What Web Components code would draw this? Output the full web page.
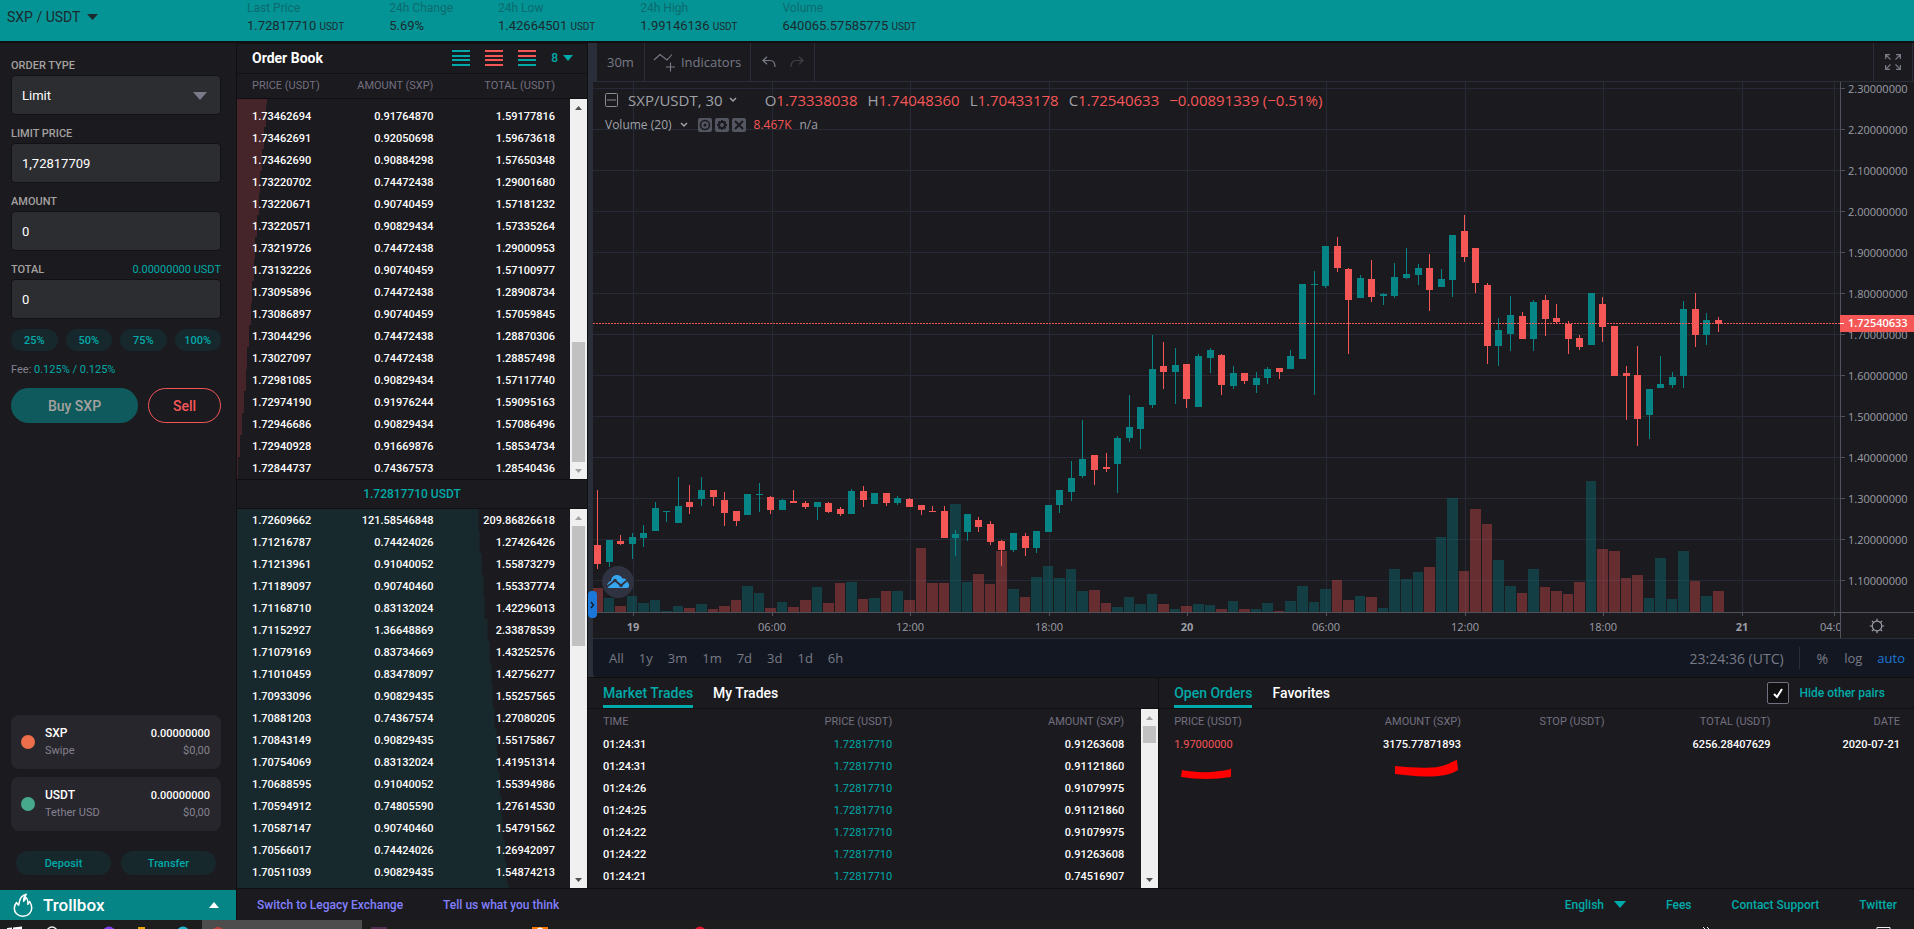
<!DOCTYPE html>
<html lang="en">
<head>
<meta charset="utf-8">
<title>SXP / USDT Exchange</title>
<style>
  :root {
    --bg: #1b1a1f;
    --edge: #101013;
    --teal: #00aaa8;
    --teal-dark: #068587;
    --red: #f55757;
    --muted: #73707f;
    --tint: #17282d;
    --grid: #262936;
    --axis: #50535e;
    --tv: #787b86;
    --tv-font: "Open Sans", "Noto Sans", sans-serif;
  }
  html, body { margin: 0; height: 100%; background: var(--bg); }
  body { font-family: Roboto, "Liberation Sans", sans-serif; color: #fff; }
</style>
</head>
<body>
<exchange-app></exchange-app>

<script>
const BASE = `*{box-sizing:border-box} button,input,select{font:inherit;color:inherit;margin:0;padding:0;border:0;background:none;appearance:none;outline:0}
button,select{cursor:pointer} svg{display:block} a{color:inherit;text-decoration:none} table{border-collapse:collapse;width:100%;table-layout:fixed} td,th{padding:0;font-weight:inherit;text-align:right}`;

function define(name, render) {
  customElements.define(name, class extends HTMLElement {
    connectedCallback() {
      if (this.shadowRoot) return;
      const template = document.createElement('template');
      template.innerHTML = `<style>${BASE}</style>` + render(this);
      this.attachShadow({ mode: 'open' }).append(template.content.cloneNode(true));
    }
  });
}

const caret = (w, h, up) => `<svg width="${w}" height="${h}" viewBox="0 0 10 6" preserveAspectRatio="none" aria-hidden="true"><path fill="currentColor" d="${up ? 'M0 6L5 0L10 6Z' : 'M0 0H10L5 6Z'}"/></svg>`;

/* ---------- top bar ---------- */
define('market-stat', el => `
<style>
  :host{display:block;font-size:13px;line-height:17px;color:#1b2a2e}
  .label{color:#0b6b6e;font-size:12px} .unit{font-size:10px}
</style>
<div class="label">${el.getAttribute('label')}</div>
<div><slot></slot>${el.hasAttribute('unit') ? ` <span class="unit">${el.getAttribute('unit')}</span>` : ''}</div>`);

define('top-bar', () => `
<style>
  :host{display:flex;height:43px;background:#059495;border-bottom:2px solid var(--edge);overflow:hidden}
  .pair{width:247px;padding-left:7px;display:flex;align-items:center;gap:7px;height:34px;font-size:14px;color:#1b2a2e}
  .stats{display:flex;gap:45px}
</style>
<button class="pair">SXP / USDT ${caret(11, 6)}</button>
<div class="stats">
  <market-stat label="Last Price" unit="USDT">1.72817710</market-stat>
  <market-stat label="24h Change">5.69%</market-stat>
  <market-stat label="24h Low" unit="USDT">1.42664501</market-stat>
  <market-stat label="24h High" unit="USDT">1.99146136</market-stat>
  <market-stat label="Volume" unit="USDT">640065.57585775</market-stat>
</div>`);

/* ---------- order form ---------- */
define('form-field', el => `
<style>
  :host{display:block;margin-bottom:8px}
  .row{display:flex;justify-content:space-between;height:20px;line-height:22px;font-size:11px;color:#a4a19f;font-weight:500}
  .hint{color:var(--teal);font-weight:400}
  .box{position:relative;height:40px}
  input,select{width:100%;height:40px;padding:0 10px;border:1px solid #121215;border-radius:4px;background:#2c2d31;color:#fff;font-size:13px}
  svg{position:absolute;right:14px;top:17px;color:#7b7889;pointer-events:none}
</style>
<div class="row"><label for="f">${el.getAttribute('label')}</label><span class="hint">${el.getAttribute('hint') || ''}</span></div>
<div class="box">${el.hasAttribute('choice')
  ? `<select id="f"><option>${el.getAttribute('value')}</option></select>${caret(14, 8)}`
  : `<input id="f" type="text" value="${el.getAttribute('value')}">`}</div>`);

define('coin-balance', el => `
<style>
  :host{display:grid;grid-template-columns:34px 1fr auto;align-items:center;height:54px;margin-bottom:8px;padding-right:11px;border-radius:8px;background:#27262c;font-size:12px;line-height:17px}
  i{width:14px;height:14px;border-radius:50%;margin-left:10px;background:${el.getAttribute('color')}}
  b{display:block;font-weight:500} .sub{color:#85828f;font-size:11px} .r{text-align:right} .r b{font-size:11px}
</style>
<i></i><div><b>${el.getAttribute('code')}</b><span class="sub">${el.getAttribute('name')}</span></div>
<div class="r"><b>0.00000000</b><span class="sub">$0,00</span></div>`);

define('order-form', () => `
<style>
  :host{display:flex;flex-direction:column;border-right:1px solid var(--edge);background:var(--bg)}
  .form{padding:12px 15px 0 11px}
  .pct{display:grid;grid-template-columns:repeat(4,1fr);gap:8px;margin:10px 0 8px}
  form-field:last-of-type{margin-bottom:0}
  .pill{height:22px;border-radius:12px;background:var(--tint);color:var(--teal);font-size:11px;font-weight:500}
  .fee{font-size:11px;line-height:22px;color:#85828f} .fee span{color:var(--teal)}
  .act{display:grid;grid-template-columns:127px 1fr;gap:10px;margin-top:7px}
  .act button{height:35px;border-radius:18px;font-size:14px;font-weight:500}
  .buy{background:#0f5a5c;color:#a4a19f} .sell{border:1px solid var(--red);color:var(--red)}
  .bal{margin-top:auto;padding:0 15px 15px 11px}
  .move{display:grid;grid-template-columns:1fr 1fr;gap:10px;padding:12px 5px 0}
  .move .pill{height:24px}
  .troll{display:flex;align-items:center;height:30px;padding:0 17px 0 13px;background:var(--teal-dark);color:#fff;font-size:17px;font-weight:500}
  .troll span{flex:1;text-align:left;margin-left:10px}
</style>
<div class="form">
  <form-field label="ORDER TYPE" value="Limit" choice></form-field>
  <form-field label="LIMIT PRICE" value="1,72817709"></form-field>
  <form-field label="AMOUNT" value="0"></form-field>
  <form-field label="TOTAL" value="0" hint="0.00000000 USDT"></form-field>
  <div class="pct"><button class="pill">25%</button><button class="pill">50%</button><button class="pill">75%</button><button class="pill">100%</button></div>
  <div class="fee">Fee: <span>0.125% / 0.125%</span></div>
  <div class="act"><button class="buy">Buy SXP</button><button class="sell">Sell</button></div>
</div>
<div class="bal">
  <coin-balance code="SXP" name="Swipe" color="#ec6e4a"></coin-balance>
  <coin-balance code="USDT" name="Tether USD" color="#47a98c"></coin-balance>
  <div class="move"><button class="pill">Deposit</button><button class="pill">Transfer</button></div>
</div>
<button class="troll"><svg width="20" height="24" viewBox="0 0 20 24" fill="none" stroke="#fff" stroke-width="1.5" stroke-linejoin="round" aria-hidden="true"><path d="M3.500 9.500C.5 13 .7 18 3.500 20.800C7 24 13 24 16.300 20.700C19.600 17.300 19 12.500 16.700 8.500L14.800 11.300C15.400 8 14.700 6 12.800 4.200C12.500 6 11.800 7.300 10.600 8.200C10.600 5.300 11.500 3 13.300 1.200C9.500 2.200 6.800 5.500 6.300 9.300L5.700 12.200C4.700 11.500 4 10.600 3.500 9.500Z"/></svg><span>Trollbox</span>${caret(10, 6, true)}</button>`);

/* ---------- scrollbar ---------- */
define('scroll-track', el => `
<style>
  :host{display:flex;flex-direction:column;align-items:center;width:17px;background:#f0f0f0}
  .arrow{height:17px;display:flex;align-items:center;color:#505050} .off{color:#a3a3a3}
  .rail{flex:1;width:13px;position:relative}
  .thumb{position:absolute;width:13px;height:${el.getAttribute('size')}px;${el.hasAttribute('end') ? 'bottom:0' : 'top:0'};background:#c1c1c1}
</style>
<div class="arrow ${el.hasAttribute('end') ? '' : 'off'}">${caret(7, 4, true)}</div>
<div class="rail"><div class="thumb"></div></div>
<div class="arrow ${el.hasAttribute('end') ? 'off' : ''}">${caret(7, 4)}</div>`);

/* ---------- order book ---------- */
const ASKS = [
  ['', '', '', 30],
  ['1.73462694', '0.91764870', '1.59177816', 29], ['1.73462691', '0.92050698', '1.59673618', 27],
  ['1.73462690', '0.90884298', '1.57650348', 25], ['1.73220702', '0.74472438', '1.29001680', 23],
  ['1.73220671', '0.90740459', '1.57181232', 22], ['1.73220571', '0.90829434', '1.57335264', 20],
  ['1.73219726', '0.74472438', '1.29000953', 18], ['1.73132226', '0.90740459', '1.57100977', 17],
  ['1.73095896', '0.74472438', '1.28908734', 15], ['1.73086897', '0.90740459', '1.57059845', 14],
  ['1.73044296', '0.74472438', '1.28870306', 12], ['1.73027097', '0.74472438', '1.28857498', 10],
  ['1.72981085', '0.90829434', '1.57117740', 9], ['1.72974190', '0.91976244', '1.59095163', 7],
  ['1.72946686', '0.90829434', '1.57086496', 5], ['1.72940928', '0.91669876', '1.58534734', 3],
  ['1.72844737', '0.74367573', '1.28540436', 1]];
const BIDS = [
  ['1.72609662', '121.58546848', '209.86826618', 242], ['1.71216787', '0.74424026', '1.27426426', 243],
  ['1.71213961', '0.91040052', '1.55873279', 245], ['1.71189097', '0.90740460', '1.55337774', 247],
  ['1.71168710', '0.83132024', '1.42296013', 248], ['1.71152927', '1.36648869', '2.33878539', 251],
  ['1.71079169', '0.83734669', '1.43252576', 253], ['1.71010459', '0.83478097', '1.42756277', 255],
  ['1.70933096', '0.90829435', '1.55257565', 256], ['1.70881203', '0.74367574', '1.27080205', 258],
  ['1.70843149', '0.90829435', '1.55175867', 260], ['1.70754069', '0.83132024', '1.41951314', 261],
  ['1.70688595', '0.91040052', '1.55394986', 263], ['1.70594912', '0.74805590', '1.27614530', 265],
  ['1.70587147', '0.90740460', '1.54791562', 266], ['1.70566017', '0.74424026', '1.26942097', 268],
  ['1.70511039', '0.90829435', '1.54874213', 270], ['', '', '', 272]];

define('depth-list', el => {
  const ask = el.getAttribute('side') === 'ask';
  return `
<style>
  :host{display:flex;min-height:0;overflow:hidden}
  .list{flex:1;min-width:0;display:flex;flex-direction:column;justify-content:${ask ? 'flex-end' : 'flex-start'};overflow:hidden}
  table{flex:none;font-size:11px;font-weight:500}
  tr{height:22px;background:linear-gradient(${ask ? '#45242a' : '#18292e'} 0 0) no-repeat 0 0/calc(var(--depth)*1px) 100%}
  td:first-child{text-align:left;padding-left:15px;width:30%} td:nth-child(2){width:29%} td:last-child{padding-right:15px}
</style>
<div class="list"><table aria-label="${ask ? 'Asks' : 'Bids'}"><tbody>${(ask ? ASKS : BIDS).map(([p, a, t, d]) =>
    `<tr style="--depth:${d}"><td>${p}</td><td>${a}</td><td>${t}</td></tr>`).join('')}</tbody></table></div>
<scroll-track size="120" ${ask ? 'end' : ''}></scroll-track>`;
});

const bars = (a, b) => `<svg width="18" height="16" aria-hidden="true">${[[0, a], [5, a], [9, b], [14, b]].map(([y, c]) => `<rect y="${y}" width="18" height="2" fill="${c}"/>`).join('')}</svg>`;
define('order-book', () => `
<style>
  :host{display:grid;grid-template-rows:31px 25px 380fr 30px 379fr;min-height:0;border-right:1px solid var(--edge)}
  header{display:flex;align-items:center;padding:0 14px 1px 15px;border-bottom:1px solid var(--edge);border-top:1px solid var(--edge)}
  h2{flex:1;margin:0;font-size:14px;font-weight:700}
  .views{display:flex;gap:15px;margin-right:15px}
  .prec{display:flex;align-items:center;gap:5px;color:var(--teal);font-size:12px;font-weight:500}
  .cols{display:grid;grid-template-columns:30% 29% 1fr;padding-right:17px;line-height:24px;font-size:11px;color:var(--muted);text-align:right;border-bottom:1px solid var(--edge)}
  .cols span:first-child{text-align:left;padding-left:15px} .cols span:last-child{padding-right:15px}
  .mid{line-height:28px;text-align:center;color:var(--teal);font-size:12px;font-weight:500;border:solid var(--edge);border-width:1px 0}
</style>
<header><h2>Order Book</h2>
  <div class="views"><button aria-label="Bids only">${bars('#00aaa8', '#00aaa8')}</button><button aria-label="Asks only">${bars('#f55757', '#f55757')}</button><button aria-label="Both sides">${bars('#f55757', '#00aaa8')}</button></div>
  <button class="prec">8 ${caret(10, 6)}</button></header>
<div class="cols"><span>PRICE (USDT)</span><span>AMOUNT (SXP)</span><span>TOTAL (USDT)</span></div>
<depth-list side="ask"></depth-list>
<div class="mid">1.72817710 USDT</div>
<depth-list side="bid"></depth-list>`);

/* ---------- chart ---------- */
/* direction, high, body top, body bottom, low (y of the price pane), volume bar height */
const CANDLES = `r 490 545 564 569 24|g 540 540 562 567 14|r 535 541 544 545 6|g 533 537 544 559 16|g 525 533 538 547 9|g 502 508 531 531 12|g 511 511 512 522 1|g 477 506 523 523 6|r 485 502 507 514 4|g 477 490 499 506 8|r 490 490 497 506 3|r 492 500 513 526 6|r 511 511 521 526 12|g 494 494 515 515 26|g 483 494 495 512 19|r 496 497 510 514 4|g 499 500 510 510 10|r 490 501 503 503 5|r 501 503 507 509 12|g 502 502 507 520 25|r 502 503 512 513 9|r 507 509 514 516 29|g 489 491 514 514 30|r 486 491 500 507 13|g 493 493 504 504 14|r 493 493 503 506 21|g 496 498 503 505 21|r 498 499 507 507 12|r 505 505 510 515 64|r 506 511 512 512 29|r 506 511 538 538 29|g 530 534 538 556 108|g 514 514 532 541 30|r 517 520 527 532 38|r 521 524 542 545 28|r 540 541 550 566 61|g 533 533 550 552 23|r 533 536 548 556 15|g 531 531 548 553 35|g 505 505 532 532 46|g 490 490 505 513 34|g 461 478 492 501 43|g 420 459 476 478 21|r 455 455 470 485 22|r 453 467 469 472 9|g 436 438 464 493 5|g 395 427 438 442 15|g 407 407 429 449 8|g 335 369 405 408 18|r 342 366 372 389 8|g 348 365 372 404 3|r 364 364 399 408 6|g 354 356 407 407 8|g 348 350 358 373 7|r 354 355 385 395 3|g 366 373 386 389 11|r 373 373 381 384 3|g 372 378 385 393 3|g 367 369 378 384 9|r 368 368 372 379 1|g 350 356 369 369 11|g 284 284 359 359 26|g 271 284 285 395 10|g 246 246 286 288 23|r 237 246 268 272 32|r 268 269 300 354 12|g 275 278 298 298 16|r 260 279 297 302 15|g 293 294 296 305 4|g 263 277 296 298 43|g 248 274 278 279 33|g 264 268 275 285 40|r 254 268 290 311 45|g 269 279 287 287 75|g 235 235 280 297 114|r 215 231 257 262 41|r 248 248 283 293 103|r 283 285 346 364 88|g 318 330 346 366 52|g 296 315 334 351 26|r 312 316 339 339 19|g 300 302 339 351 43|r 295 300 319 336 25|r 304 318 322 324 21|r 321 324 339 354 18|r 335 338 347 350 30|g 293 293 345 345 131|r 297 304 327 342 63|r 326 326 376 376 61|r 366 373 376 420 34|r 346 375 419 446 37|g 389 389 415 439 14|g 356 384 388 388 54|g 372 377 385 388 13|g 301 309 376 388 61|r 293 309 335 347 31|g 313 320 335 345 16|r 317 320 324 332 21`.split('|').map(s => s.split(' '));
const TIMES = [[40, '19'], [179, '06:00'], [317, '12:00'], [456, '18:00'], [594, '20'], [733, '06:00'], [872, '12:00'], [1010, '18:00'], [1149, '21'], [1241, '04:00']];
const PANE_TOP = 82, PANE_H = 530;
const PRICES = Array.from({ length: 13 }, (_, i) => [6 + i * 41, (2.3 - i / 10).toFixed(8)]);

define('price-pane', () => {
  const left = i => Math.round(1 + i * 11.557);
  const vol = CANDLES.map(([d, , , , , v], i) => `<rect x="${left(i) - 2}" y="${PANE_H - v}" width="${left(i + 1) - left(i) - 1}" height="${v}" fill="${d === 'r' ? 'rgba(245,87,87,.35)' : 'rgba(6,133,135,.35)'}"/>`).join('');
  const sticks = CANDLES.map(([d, h, t, b, l], i) => `<path fill="${d === 'r' ? '#f55757' : '#068587'}" d="M${left(i)} ${t - PANE_TOP}h7V${b - PANE_TOP}h-7ZM${left(i) + 3} ${h - PANE_TOP}h1V${l - PANE_TOP}h-1Z"/>`).join('');
  return `
<style>:host{display:block;position:relative;min-width:0;overflow:hidden} svg{position:absolute;inset:0}
  .legend{position:absolute;left:12px;top:5px;font-family:var(--tv-font);color:#a0a2a8;white-space:nowrap}
  .line{display:flex;align-items:center;height:25px;font-size:15px}
  .line.small{font-size:12px} em{font-style:normal;color:var(--red)} svg.i{position:static;flex:none}
  .ohlc{display:flex;gap:10px;margin-left:28px} .sym{margin:0 6px 0 10px} .vol{margin-right:8px}
  .tools{display:flex;gap:3px;margin:0 8px 0 10px} .na{margin-left:8px}
  .logo{position:absolute;left:9px;bottom:14px;width:32px;height:32px;border-radius:50%;background:#2f3241}
</style>
<svg width="100%" height="100%" shape-rendering="crispEdges" role="img" aria-label="SXP/USDT price chart">
  <g fill="#262936">${PRICES.map(([y]) => `<rect y="${y}" width="100%" height="1"/>`).join('')}${TIMES.map(([x]) => `<rect x="${x}" width="1" height="100%"/>`).join('')}</g>
  ${vol}${sticks}<path d="M0 241.5H4000" stroke="#f55757" stroke-dasharray="2 1"/>
</svg>
<div class="legend">
  <div class="line"><svg class="i" width="13" height="14" fill="none" stroke="#8a8c94"><rect x=".5" y=".5" width="12" height="13" rx="1"/><path d="M2 7H11"/></svg>
    <span class="sym">SXP/USDT, 30</span><svg class="i" width="8" height="6" fill="none" stroke="#a0a2a8" stroke-width="1.500"><path d="M1 1L4 4L7 1"/></svg>
    <div class="ohlc"><span>O<em>1.73338038</em></span><span>H<em>1.74048360</em></span><span>L<em>1.70433178</em></span><span>C<em>1.72540633</em></span><em>−0.00891339 (−0.51%)</em></div></div>
  <div class="line small"><span class="vol">Volume (20)</span><svg class="i" width="8" height="6" fill="none" stroke="#a0a2a8" stroke-width="1.500"><path d="M1 1L4 4L7 1"/></svg>
    <div class="tools">
      <svg class="i" width="14" height="14"><rect width="14" height="14" rx="2" fill="#535661"/><circle cx="7" cy="7" r="4.500" fill="none" stroke="#1b1a1f" stroke-width="1.600"/><circle cx="7" cy="7" r="1.500" fill="#1b1a1f"/></svg>
      <svg class="i" width="14" height="14"><rect width="14" height="14" rx="2" fill="#535661"/><circle cx="7" cy="7" r="3" fill="none" stroke="#1b1a1f" stroke-width="2"/><path stroke="#1b1a1f" stroke-width="1.800" d="M7 2V4M7 10V12M2 7H4M10 7H12M3.500 3.500L5 5M9 9L10.500 10.500M10.500 3.500L9 5M5 9L3.500 10.500"/></svg>
      <svg class="i" width="14" height="14"><rect width="14" height="14" rx="2" fill="#535661"/><path stroke="#1b1a1f" stroke-width="2" d="M3 3L11 11M11 3L3 11"/></svg></div>
    <em>8.467K</em><span class="na">n/a</span></div>
</div>
<div class="logo"><svg class="i" width="32" height="32" viewBox="0 0 32 32"><path fill="#37a6ef" d="M5 20.500C5 17 7 15.500 9 15C9.500 11 12 9 15 9C17.500 9 19.500 10.500 20.500 12.500C23.500 12 25.500 14 25.700 16.500C27 17.500 27.500 19 27 20.500C26.600 21.600 25.500 22 24.500 22H6.500Z"/><path fill="none" stroke="#2f3241" stroke-width="1.800" d="M4.500 21L13 14.500L19 19.500L25.500 14"/><circle cx="13" cy="14.500" r="1.800" fill="#2f3241"/><circle cx="19" cy="19.500" r="1.800" fill="#2f3241"/></svg></div>`;
});

define('price-scale', () => `
<style>:host{display:block} text{font:11px "Open Sans","Noto Sans",sans-serif;fill:#9b9ea6}</style>
<svg width="100%" height="100%" shape-rendering="crispEdges">
  <rect width="1" height="100%" fill="#50535e"/>
  ${PRICES.map(([y, p]) => `<rect y="${y}" width="5" height="1" fill="#50535e"/><text x="8" y="${y + 5}">${p}</text>`).join('')}
  <rect y="233" width="100%" height="17" fill="#f55757"/><rect y="241" width="4" height="1" fill="#fff"/>
  <text x="8" y="245" style="fill:#fff;font-weight:600">1.72540633</text>
</svg>`);

define('time-scale', () => `
<style>:host{display:grid;grid-template-columns:1fr 74px;border-top:1px solid var(--axis);border-bottom:1px solid #2a2e39}
  text{font:11px "Open Sans","Noto Sans",sans-serif;fill:#9b9ea6;text-anchor:middle} .d{font-weight:700}
  button{border-left:1px solid var(--axis);padding-left:28px;color:#9b9ea6}</style>
<svg width="100%" height="25">${TIMES.map(([x, t]) => `<rect x="${x}" width="1" height="3" fill="#50535e"/><text x="${x}" y="18" ${t.length < 3 ? 'class="d"' : ''}>${t}</text>`).join('')}</svg>
<button aria-label="Chart settings"><svg width="16" height="16" viewBox="0 0 16 16" fill="none" stroke="currentColor" stroke-width="1.200"><circle cx="8" cy="8" r="4.800"/><path d="M8 .8V3M8 13V15.200M.8 8H3M13 8H15.200M2.900 2.900L4.500 4.500M11.500 11.500L13.100 13.100M13.100 2.900L11.500 4.500M4.500 11.500L2.900 13.100"/></svg></button>`);

define('price-chart', () => `
<style>
  :host{display:grid;grid-template-rows:39px 1fr 27px 38px;min-height:0;padding-left:5px;background:#2a2e39;position:relative;font-family:var(--tv-font)}
  .bar{display:flex;align-items:stretch;margin-left:4px;padding-right:1px;background:var(--bg);border-bottom:1px solid #2a2e39;color:var(--tv);font-size:13px}
  .bar button{display:flex;align-items:center;border-right:1px solid #2a2e39}
  .b1{padding:0 10px} .b2{padding:0 9px 0 8px;gap:4px} .bar .b3{padding:0 4px 0 11px;border:0} .bar .b4{padding:0 10px;opacity:.4;border:0}
  .sep{border-left:1px solid #2a2e39} .full{margin-left:auto;padding:0 11px;border-left:1px solid #2a2e39}
  .pane{display:grid;grid-template-columns:1fr 74px;background:var(--bg);min-height:0}
  time-scale{background:var(--bg)}
  .range{display:flex;align-items:center;gap:15px;padding:0 9px 0 16px;background:#131722;border-bottom-left-radius:4px;color:var(--tv);font-size:13px}
  .clock,.range .pc{font-size:14px} .clock{margin-left:auto} .range .v{width:1px;height:22px;background:#2a2e39}
  .range .pc{padding:0 1px 0 2px} .auto{color:#1b78d8}
  .grip{position:absolute;left:0;bottom:59px;width:9px;height:27px;border-radius:4px;background:#1b78d8;color:#131722;display:flex;align-items:center;justify-content:center}
</style>
<div class="bar">
  <button class="b1">30m</button>
  <button class="b2"><svg width="24" height="22" viewBox="0 0 24 22" fill="none" stroke="currentColor" stroke-width="1.100"><path d="M1 9L7 3.500L14 9L19 3.500M17.500 11.500V20.500M13 16H22"/></svg>Indicators</button>
  <button class="b3" aria-label="Undo"><svg width="14" height="12" fill="none" stroke="currentColor" stroke-width="1.200"><path d="M5 .8L1 4.500L5 8.200M1 4.500H8C11 4.500 13 6.500 13 11"/></svg></button>
  <button class="b4" aria-label="Redo"><svg width="14" height="12" fill="none" stroke="currentColor" stroke-width="1.200"><path d="M9 .8L13 4.500L9 8.200M13 4.500H6C3 4.500 1 6.500 1 11"/></svg></button><span class="sep"></span>
  <button class="full" aria-label="Full screen"><svg width="16" height="16" fill="none" stroke="currentColor" stroke-width="1.200"><path d="M.6 5V.6H5M11 .6H15.400V5M15.400 11V15.400H11M5 15.400H.6V11M.6 .6L5.500 5.500M15.400 .6L10.500 5.500M15.400 15.400L10.500 10.500M.6 15.400L5.500 10.500"/></svg></button>
</div>
<div class="pane"><price-pane></price-pane><price-scale></price-scale></div>
<time-scale></time-scale>
<div class="range"><button>All</button><button>1y</button><button>3m</button><button>1m</button><button>7d</button><button>3d</button><button>1d</button><button>6h</button>
  <span class="clock">23:24:36 (UTC)</span><span class="v"></span><button class="pc">%</button><button>log</button><button class="auto">auto</button></div>
<button class="grip" aria-label="Show drawing tools"><svg width="5" height="8" fill="none" stroke="currentColor" stroke-width="1.300"><path d="M1 1L3.500 4L1 7"/></svg></button>`);

/* ---------- panels ---------- */
define('tab-panel', el => {
  const [on, off] = el.getAttribute('tabs').split('|');
  return `
<style>
  :host{display:grid;grid-template-rows:31px 1fr;min-width:0;min-height:0;border-top:1px solid var(--edge)}
  nav{display:flex;gap:20px;padding:0 15px;border-bottom:1px solid var(--edge);font-size:14px;font-weight:500}
  nav button{height:30px;padding-top:2px;border-bottom:3px solid transparent;font-weight:500}
  nav .on{color:var(--teal);border-color:var(--teal);border-radius:2px 2px 0 0}
  .end{margin-left:auto;padding-right:14px;display:flex;align-items:center}
</style>
<nav><button class="on">${on}</button><button>${off}</button><div class="end"><slot name="tools"></slot></div></nav>
<slot></slot>`;
});

const TRADES = [['01:24:31', '0.91263608'], ['01:24:31', '0.91121860'], ['01:24:26', '0.91079975'], ['01:24:25', '0.91121860'], ['01:24:22', '0.91079975'], ['01:24:22', '0.91263608'], ['01:24:21', '0.74516907']];
const TABLE = `table{font-size:11px;font-weight:500} th{height:24px;font-weight:400;color:var(--muted)} td{height:22px} th:first-child,td:first-child{text-align:left;padding-left:15px}`;
define('trade-list', () => `
<style>:host{display:flex;min-height:0;overflow:hidden}${TABLE}
  div{flex:1} .p{color:var(--teal);font-weight:400} th:last-child,td:last-child{padding-right:17px}</style>
<div><table><thead><tr><th style="width:20%">TIME</th><th style="width:35%">PRICE (USDT)</th><th>AMOUNT (SXP)</th></tr></thead>
<tbody>${TRADES.map(([t, a]) => `<tr><td>${t}</td><td class="p">1.72817710</td><td>${a}</td></tr>`).join('')}</tbody></table></div>
<scroll-track size="17"></scroll-track>`);

define('open-orders', () => `
<style>:host{display:block;position:relative}${TABLE}
  .p{color:var(--red);font-weight:400} th:last-child,td:last-child{padding-right:14px}
  .mark{position:absolute;left:22px;top:50px}</style>
<table><thead><tr><th style="width:20%">PRICE (USDT)</th><th style="width:20%">AMOUNT (SXP)</th><th style="width:19%">STOP (USDT)</th><th style="width:22%">TOTAL (USDT)</th><th>DATE</th></tr></thead>
<tbody><tr><td class="p">1.97000000</td><td>3175.77871893</td><td></td><td>6256.28407629</td><td>2020-07-21</td></tr></tbody></table>
<svg class="mark" width="280" height="30" aria-hidden="true"><path fill="#f00" d="M1 11C16 14 34 14 50 10V18C34 20.500 16 20.500 0 18ZM214 7C234 9 254 10 264 6C270 4 272 2 276 1L277 11C270 15 264 17 250 17.500C236 18 224 16 214 15Z"/></svg>`);

define('pair-filter', () => `
<style>:host{display:flex;color:var(--teal);font-size:12px;font-weight:500}
  label{display:flex;align-items:center;gap:10px}
  input{width:22px;height:22px;border:1px solid #73707f;border-radius:2px;background:#101013 url("data:image/svg+xml,%3Csvg xmlns='http://www.w3.org/2000/svg' width='12' height='12' fill='none' stroke='white' stroke-width='2'%3E%3Cpath d='M2 7L5 10L10 2'/%3E%3C/svg%3E") no-repeat center}</style>
<label><input type="checkbox" checked>Hide other pairs</label>`);

define('site-footer', () => `
<style>:host{display:flex;align-items:center;gap:40px;height:32px;padding:0 17px 0 20px;border-top:1px solid var(--edge);font-size:12px;font-weight:500;color:var(--teal)}
  .p{color:#8280ff} .lang{display:flex;align-items:center;gap:10px;margin-left:auto;font-weight:500}</style>
<a class="p" href="#legacy">Switch to Legacy Exchange</a><a class="p" href="#feedback">Tell us what you think</a>
<button class="lang">English ${caret(12, 7)}</button><a href="#fees">Fees</a><a href="#support">Contact Support</a><a href="#twitter">Twitter</a>`);

define('desktop-edge', () => `
<style>:host{display:block;height:9px;overflow:hidden;background:#1d1d1d}</style>
<svg width="100%" height="9" aria-hidden="true"><rect x="202" width="160" height="9" fill="#4d4d4d"/>
<path fill="#fff" d="M7 9V8L12 7.500V9ZM13 9V7.400L22 6.500V9Z"/><circle cx="52" cy="12" r="5" fill="none" stroke="#eee" stroke-width="1.500"/>
<circle cx="109" cy="13" r="6.500" fill="#7b3ff0"/><rect x="138" y="7" width="7" height="2" fill="#e9a500"/><circle cx="183" cy="13" r="6.500" fill="#22b8cf"/><circle cx="218" cy="13" r="6" fill="#c74238"/>
<rect x="371" y="7" width="16" height="2" fill="#4d3050"/><rect x="532" y="7" width="16" height="2" fill="#ff7a00"/><circle cx="540" cy="11" r="3.500" fill="#fff"/><circle cx="700" cy="12" r="5.500" fill="#e5142a"/>
<path fill="none" stroke="#eee" d="M1703 7L1706 10M1707 7L1710 10M1877 9V7.500H1890V9"/></svg>`);

define('exchange-app', () => `
<style>
  :host{display:flex;flex-direction:column;height:100vh;min-height:720px;overflow:hidden}
  main{flex:1;display:grid;grid-template-columns:237px minmax(0,1fr);min-height:0}
  .work{display:grid;grid-template:minmax(0,1fr) 32px/minmax(0,1fr);min-height:0}
  .desk{display:grid;grid-template-columns:351px minmax(0,1fr);min-height:0}
  .right{display:grid;grid-template-rows:minmax(0,1fr) 211px;min-height:0}
  .panels{display:grid;grid-template-columns:43fr 57fr;min-height:0}
  .panels > :last-child{border-left:1px solid var(--edge)}
</style>
<top-bar></top-bar>
<main><order-form></order-form>
  <div class="work"><div class="desk"><order-book></order-book>
    <div class="right"><price-chart></price-chart>
      <div class="panels"><tab-panel tabs="Market Trades|My Trades"><trade-list></trade-list></tab-panel>
        <tab-panel tabs="Open Orders|Favorites"><pair-filter slot="tools"></pair-filter><open-orders></open-orders></tab-panel></div></div></div>
    <site-footer></site-footer></div></main>
<desktop-edge></desktop-edge>`);
</script>
</body>
</html>
